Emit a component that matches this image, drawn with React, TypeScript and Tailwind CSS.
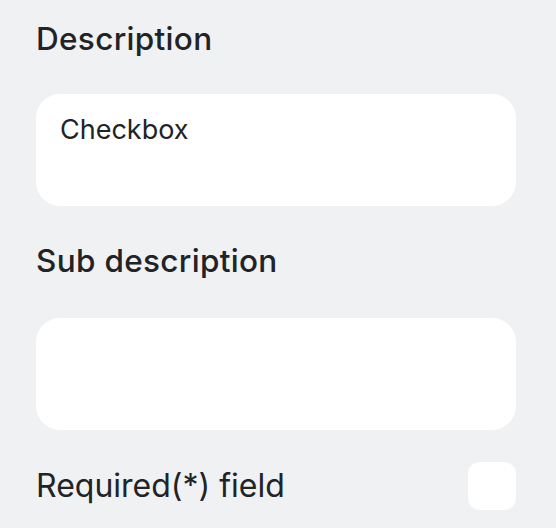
export default function App() {
  return (
    <div className="min-h-screen w-full bg-[#f0f1f3] font-['Inter',sans-serif] text-[#222326]">
      <div className="flex flex-col pl-[36px] pr-[40px] pt-[20px]">
        <h2 className="text-[31.5px] leading-[38px] font-medium tracking-[0.01em]">Description</h2>
        <div className="mt-[36px] h-[112px] rounded-[24px] bg-white px-[24px] pt-[20px] text-[27px] leading-[32px]">
          Checkbox
        </div>
        <h2 className="mt-[36px] text-[31.5px] leading-[38px] font-medium tracking-[0.01em]">Sub description</h2>
        <div className="mt-[38px] h-[112px] rounded-[24px] bg-white" />
        <div className="mt-[32px] flex h-[48px] items-center justify-between">
          <span className="text-[32px] leading-[48px]">Required(*) field</span>
          <div className="h-[48px] w-[48px] rounded-[12px] bg-white" />
        </div>
      </div>
    </div>
  );
}
